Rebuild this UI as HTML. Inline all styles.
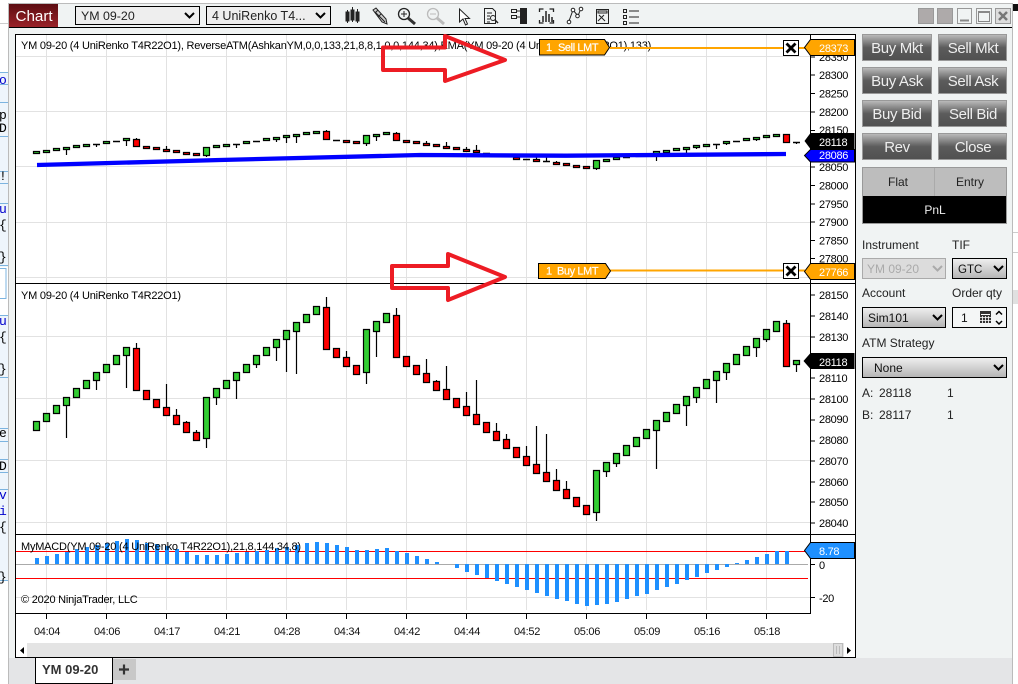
<!DOCTYPE html>
<html><head><meta charset="utf-8"><title>Chart</title>
<style>
html,body{margin:0;padding:0;background:#fff;width:1018px;height:684px;overflow:hidden}
svg{display:block;font-family:"Liberation Sans",Arial,sans-serif}
.ax text{font-size:11px;fill:#000;letter-spacing:-.3px}
.tm text{font-size:11px;fill:#111;text-anchor:middle;letter-spacing:-.3px}
.btn text{font-size:15px;fill:#eee;text-anchor:middle;letter-spacing:-.35px}
.lb text{font-size:12px;fill:#222}
.ti{font-size:11px;fill:#000;letter-spacing:-.215px}
.fl{font-size:11px;fill:#fff;letter-spacing:-.4px;stroke:#fff;stroke-width:.2px}
.pr{font-size:11px;fill:#fff;letter-spacing:-.3px}
</style></head><body>
<svg width="1018" height="684" viewBox="0 0 1018 684" xmlns="http://www.w3.org/2000/svg">
<defs>
<linearGradient id="bg" x1="0" y1="0" x2="0" y2="1"><stop offset="0" stop-color="#bdbdbd"/><stop offset=".5" stop-color="#5c5c5c"/><stop offset="1" stop-color="#505050"/></linearGradient>
<linearGradient id="sel" x1="0" y1="0" x2="0" y2="1"><stop offset="0" stop-color="#f0f0f0"/><stop offset="1" stop-color="#b4b4b4"/></linearGradient>
<linearGradient id="chart" x1="0" y1="0" x2="0" y2="1"><stop offset="0" stop-color="#5d0d12"/><stop offset="1" stop-color="#9a2228"/></linearGradient>
</defs>

<!-- background behind the window -->
<rect width="1018" height="684" fill="#fff"/>
<g font-family="'Liberation Mono',monospace" font-size="13">
<rect x="0" y="72" width="8" height="195" fill="#eef5fc"/>
<rect x="0" y="315" width="8" height="265" fill="#eef5fc"/>
<path d="M0 72.500H8M0 84.500H8M0 102.500H8M0 136.500H8M0 171.500H8M0 183.500H8M0 203.500H8M0 265.500H8M0 315.500H8M0 377.500H8M0 428.500H8M0 441.500H8M0 459.500H8M0 472.500H8M0 489.500H8M0 580.500H8" stroke="#7cb4e0" fill="none"/>
<rect x="-1" y="268.500" width="7" height="30" fill="#fff" stroke="#7cb4e0"/>
<text x="-1" y="84" fill="#00c">o:</text><text x="-1" y="119" fill="#000">p</text><text x="-1" y="132" fill="#000">D:</text>
<text x="-1" y="180" fill="#000">!!</text><text x="-1" y="213" fill="#00c">u:</text><text x="-1" y="229" fill="#000">{</text><text x="-1" y="261" fill="#000">}</text>
<text x="-1" y="325" fill="#00c">u:</text><text x="-1" y="341" fill="#000">{</text><text x="-1" y="373" fill="#000">}</text>
<text x="-1" y="437" fill="#000">e</text><text x="-1" y="470" fill="#000">D:</text><text x="-1" y="499" fill="#00c">v:</text><text x="-1" y="515" fill="#00c">i:</text><text x="-1" y="531" fill="#000">{</text><text x="-1" y="581" fill="#000">}</text>
</g>
<rect x="1012" y="4" width="6" height="7" fill="#111"/>
<rect x="1013" y="290" width="5" height="14" fill="#e0e0e0"/>
<path d="M0 23.500H8M1013 232.500H1018M1013 252.500H1018" stroke="#ccc"/>

<!-- window -->
<rect x="8.500" y="3.500" width="1004" height="690" fill="#f0f3f3" stroke="#bbb"/>
<rect x="9" y="658" width="1003" height="26" fill="#e4e5e7"/>
<path d="M9 27.500H1012" stroke="#000"/>

<!-- Chart tab -->
<rect x="9" y="4" width="49" height="23" fill="url(#chart)"/>
<text x="15.500" y="21" font-size="15.200" fill="#fff">Chart</text>

<!-- selects -->
<rect x="75.500" y="6.500" width="124" height="18" fill="#eee" stroke="#000"/>
<text x="81" y="20" font-size="12.400" fill="#222">YM 09-20</text>
<path d="M185 13l4.500 4.500 4.500-4.500" fill="none" stroke="#000" stroke-width="2"/>
<rect x="206.500" y="6.500" width="124" height="18" fill="#eee" stroke="#000"/>
<text x="212" y="20" font-size="12.500" fill="#222">4 UniRenko T4...</text>
<path d="M316 13l4.500 4.500 4.500-4.500" fill="none" stroke="#000" stroke-width="2"/>

<!-- toolbar icons -->
<g fill="none" stroke="#222">
<path d="M347.500 10V23M352.500 7V22M357.500 9V23" stroke-width="1"/>
<path d="M346 12h3v9h-3zM351 10h3v10h-3zM356 12h3v9h-3z" fill="#222"/>
<path d="M373 10l3-2 10 11 1 5-5-2z" fill="#ccc" stroke="#222"/><path d="M375 12l10 10M378 10l-3 3M381 14l-3 3" stroke-width="1"/>
<circle cx="404" cy="14" r="5.500" stroke-width="1.300"/><path d="M401 14h6M404 11v6"/><path d="M408 18l7 6" stroke="#333" stroke-width="3"/>
<g stroke="#bbb"><circle cx="433" cy="14" r="5.500" stroke-width="1.300"/><path d="M430 14h6"/><path d="M437 18l7 6" stroke-width="3"/></g>
<path d="M459.500 9v13l3.500-3 2.500 6 2-1-2.500-5.500h4.500z" fill="#fff" stroke-width="1"/>
<path d="M484.500 8.500h8l3 3v12h-11zM487 13h5M487 16h3M487 19h3M487 22h3"/><circle cx="493" cy="18" r="2.500"/><path d="M495 20l3 3" stroke-width="1.500"/>
<path d="M511.500 9.500h5v3h-5zM511.500 15.500h5v3h-5zM516 11h5M516 17h5"/><rect x="520" y="8" width="7" height="16" fill="#222" stroke="none"/>
<path d="M539.500 12V9h4M539.500 20v3h4M553.500 12V9h-4M553.500 20v3h-4" stroke-width="1.300"/><path d="M543 22v-6M546 22V11M549 22v-8M552 22v-5" stroke-width="1.500"/>
<path d="M569 21l4-11 5 6 3-8" stroke-width="1"/><circle cx="569" cy="22" r="1.800" fill="#fff"/><circle cx="573" cy="10" r="1.800" fill="#fff"/><circle cx="577.500" cy="16" r="1.800" fill="#fff"/><circle cx="581" cy="9" r="1.800" fill="#fff"/>
<path d="M596.500 9.500h12v14h-12zM598 11h9v2h-9zM599 15l6 6M604 15l-6 6" stroke-width="1"/>
<path d="M623.500 9.500h3v3h-3zM623.500 15.500h3v3h-3zM623.500 21.500h3v3h-3zM629 11h10M629 17h10M629 23h10" stroke-width="1"/>
</g>

<!-- window buttons -->
<rect x="918.500" y="8.500" width="15" height="15" fill="#aeaaaa" stroke="#999"/>
<rect x="937.500" y="8.500" width="15" height="15" fill="#aeaaaa" stroke="#999"/>
<rect x="957.500" y="8.500" width="14" height="15" fill="#f0f3f3" stroke="#999"/><path d="M960 20.500h9" stroke="#888" stroke-width="2"/>
<rect x="976.500" y="8.500" width="15" height="15" fill="#f0f3f3" stroke="#999"/><rect x="978.500" y="11.500" width="11" height="10" fill="none" stroke="#888"/><path d="M978 12h12" stroke="#888" stroke-width="2"/>
<rect x="995.500" y="8.500" width="15" height="15" fill="#ddd" stroke="#999"/><path d="M999 12l8 8M1007 12l-8 8" stroke="#777" stroke-width="2.500"/>

<!-- chart frame -->
<rect x="15.500" y="34.500" width="840" height="623" fill="#fff" stroke="#000"/>

<!-- grid -->
<path d="M46.500 35V283M106.500 35V283M166.500 35V283M226.500 35V283M286.500 35V283M346.500 35V283M406.500 35V283M466.500 35V283M526.500 35V283M586.500 35V283M646.500 35V283M706.500 35V283M766.500 35V283
M46.500 284V534M106.500 284V534M166.500 284V534M226.500 284V534M286.500 284V534M346.500 284V534M406.500 284V534M466.500 284V534M526.500 284V534M586.500 284V534M646.500 284V534M706.500 284V534M766.500 284V534
M46.500 535V610M106.500 535V610M166.500 535V610M226.500 535V610M286.500 535V610M346.500 535V610M406.500 535V610M466.500 535V610M526.500 535V610M586.500 535V610M646.500 535V610M706.500 535V610M766.500 535V610
M16 56.500H810M16 111.500H810M16 166.500H810M16 222.500H810M16 277.500H810M16 336.500H810M16 398.500H810M16 460.500H810M16 522.500H810M16 597.500H810" stroke="#e2e2e2" fill="none"/>

<!-- pane dividers -->
<path d="M16 283.500H855M16 534.500H855M16 613.500H811M810.500 35V613" stroke="#000" fill="none"/>
<path d="M46.500 614v5M106.500 614v5M166.500 614v5M226.500 614v5M286.500 614v5M346.500 614v5M406.500 614v5M466.500 614v5M526.500 614v5M586.500 614v5M646.500 614v5M706.500 614v5M766.500 614v5" stroke="#000"/>
<path d="M811 57h4M811 75h4M811 93.500h4M811 112h4M811 130.500h4M811 167h4M811 185.500h4M811 204h4M811 222h4M811 240.500h4M811 258.500h4M811 295h4M811 316h4M811 337h4M811 378h4M811 399h4M811 420h4M811 441h4M811 461h4M811 482h4M811 502h4M811 523h4M811 564.500h4M811 597.500h4" stroke="#000"/>

<!-- pane titles -->
<text class="ti" x="21" y="49">YM 09-20 (4 UniRenko T4R22O1), ReverseATM(AshkanYM,0,0,133,21,8,8,1,0,0,144,34),EMA(YM 09-20 (4 UniRenko T4R22O1),133)</text>
<text class="ti" x="21" y="299">YM 09-20 (4 UniRenko T4R22O1)</text>

<!-- top pane candles -->
<path d="M66.500 150V155M96.500 144V147M126.500 141V146M136.500 138V139M166.500 146V149M206.500 156V157M236.500 144V148M276.500 140V142M286.500 138V143M296.500 137V143M326.500 130V131M366.500 144V146M376.500 137V141M396.500 132V133M426.500 141V143M446.500 142V146M466.500 147V149M476.500 145V150M536.500 157V159M546.500 157V161M556.500 161V162M596.500 169V170M656.500 154V161M686.500 150V153M696.500 148V149M716.500 144V149M726.500 144V145M756.500 140V141M796.500 142V144" stroke="#000" stroke-width="1.200" fill="none"/>
<path d="M93 144.500h7M113 141.500h7M233 144.500h7M253 141.500h7M333 140.500h7M483 153.500h7M493 154.500h7M523 159.500h7M543 161.500h7M623 157.500h7M633 155.500h7M643 154.500h7M713 144.500h7M733 141.500h7M793 142.500h7" stroke="#000" stroke-width="1.500" fill="none"/>
<path d="M33.500 151.500h6v2h-6zM43.500 150.500h6v2h-6zM53.500 148.500h6v2h-6zM63.500 147.500h6v2h-6zM73.500 145.500h6v2h-6zM83.500 144.500h6v2h-6zM103.500 141.500h6v2h-6zM123.500 138.500h6v2h-6zM203.500 147.500h6v8h-6zM213.500 145.500h6v2h-6zM223.500 144.500h6v2h-6zM243.500 141.500h6v2h-6zM263.500 138.500h6v2h-6zM273.500 137.500h6v2h-6zM283.500 135.500h6v2h-6zM293.500 134.500h6v2h-6zM303.500 132.500h6v2h-6zM313.500 131.500h6v2h-6zM363.500 135.500h6v8h-6zM373.500 134.500h6v2h-6zM383.500 132.500h6v2h-6zM593.500 160.500h6v8h-6zM603.500 159.500h6v2h-6zM613.500 157.500h6v2h-6zM653.500 151.500h6v2h-6zM663.500 150.500h6v2h-6zM673.500 148.500h6v2h-6zM683.500 147.500h6v2h-6zM693.500 145.500h6v2h-6zM703.500 144.500h6v2h-6zM723.500 141.500h6v2h-6zM743.500 138.500h6v2h-6zM753.500 137.500h6v2h-6zM763.500 135.500h6v2h-6zM773.500 134.500h6v2h-6z" fill="#32cd32" stroke="#000" stroke-width="1.200"/>
<path d="M133.500 139.500h6v7h-6zM143.500 146.500h6v2h-6zM153.500 147.500h6v2h-6zM163.500 149.500h6v2h-6zM173.500 150.500h6v2h-6zM183.500 152.500h6v2h-6zM193.500 153.500h6v2h-6zM323.500 131.500h6v8h-6zM343.500 140.500h6v2h-6zM353.500 141.500h6v2h-6zM393.500 133.500h6v7h-6zM403.500 140.500h6v2h-6zM413.500 141.500h6v2h-6zM423.500 143.500h6v2h-6zM433.500 144.500h6v2h-6zM443.500 146.500h6v2h-6zM453.500 147.500h6v2h-6zM463.500 149.500h6v2h-6zM473.500 150.500h6v2h-6zM513.500 157.500h6v2h-6zM533.500 159.500h6v2h-6zM553.500 162.500h6v2h-6zM563.500 163.500h6v2h-6zM573.500 165.500h6v2h-6zM583.500 166.500h6v2h-6zM783.500 134.500h6v8h-6z" fill="#f00" stroke="#000" stroke-width="1.200"/>
<polyline points="37,165 220,160 420,155 566,155.700 786,154" fill="none" stroke="#0000ff" stroke-width="4.300"/>

<!-- main candles -->
<path d="M66.500 406V438M96.500 381V390M126.500 356V388M136.500 343V348M166.500 384V407M176.500 409V415M186.500 421V422M196.500 430V432M206.500 439V448M216.500 398V405M236.500 381V399M256.500 365V368M276.500 348V361M286.500 340V372M296.500 332V374M326.500 297V307M346.500 351V357M366.500 373V384M376.500 332V357M396.500 308V315M426.500 359V373M436.500 380V381M446.500 366V389M466.500 392V406M476.500 380V414M496.500 423V431M506.500 434V439M526.500 446V456M536.500 426V464M546.500 434V472M556.500 469V480M566.500 481V489M596.500 513V521M606.500 472V477M616.500 464V467M656.500 431V469M686.500 406V426M696.500 398V403M716.500 381V403M726.500 373V380M756.500 348V357M766.500 340V342M786.500 320V323M796.500 365V372" stroke="#000" stroke-width="1.200" fill="none"/>
<path d="M33.500 421.500h6v9h-6zM43.500 413.500h6v8h-6zM53.500 405.500h6v8h-6zM63.500 397.500h6v8h-6zM73.500 388.500h6v9h-6zM83.500 380.500h6v8h-6zM93.500 372.500h6v8h-6zM103.500 364.500h6v8h-6zM113.500 355.500h6v9h-6zM123.500 347.500h6v8h-6zM203.500 397.500h6v41h-6zM213.500 388.500h6v9h-6zM223.500 380.500h6v8h-6zM233.500 372.500h6v8h-6zM243.500 364.500h6v8h-6zM253.500 355.500h6v9h-6zM263.500 347.500h6v8h-6zM273.500 339.500h6v8h-6zM283.500 330.500h6v9h-6zM293.500 322.500h6v9h-6zM303.500 314.500h6v8h-6zM313.500 306.500h6v8h-6zM363.500 329.500h6v43h-6zM373.500 321.500h6v10h-6zM383.500 313.500h6v9h-6zM593.500 470.500h6v42h-6zM603.500 462.500h6v9h-6zM613.500 453.500h6v10h-6zM623.500 445.500h6v10h-6zM633.500 437.500h6v9h-6zM643.500 429.500h6v9h-6zM653.500 420.500h6v10h-6zM663.500 412.500h6v9h-6zM673.500 404.500h6v9h-6zM683.500 396.500h6v9h-6zM693.500 387.500h6v10h-6zM703.500 379.500h6v9h-6zM713.500 371.500h6v9h-6zM723.500 363.500h6v9h-6zM733.500 354.500h6v10h-6zM743.500 346.500h6v9h-6zM753.500 338.500h6v9h-6zM763.500 329.500h6v10h-6zM773.500 321.500h6v10h-6zM793.500 360.500h6v4h-6z" fill="#32cd32" stroke="#000" stroke-width="1.200"/>
<path d="M133.500 348.500h6v42h-6zM143.500 390.500h6v9h-6zM153.500 399.500h6v8h-6zM163.500 407.500h6v8h-6zM173.500 415.500h6v9h-6zM183.500 422.500h6v10h-6zM193.500 432.500h6v8h-6zM323.500 307.500h6v42h-6zM333.500 348.500h6v9h-6zM343.500 357.500h6v9h-6zM353.500 365.500h6v9h-6zM393.500 315.500h6v42h-6zM403.500 356.500h6v10h-6zM413.500 365.500h6v9h-6zM423.500 373.500h6v9h-6zM433.500 381.500h6v9h-6zM443.500 389.500h6v10h-6zM453.500 398.500h6v9h-6zM463.500 406.500h6v9h-6zM473.500 414.500h6v10h-6zM483.500 422.500h6v10h-6zM493.500 431.500h6v9h-6zM503.500 439.500h6v9h-6zM513.500 447.500h6v10h-6zM523.500 456.500h6v9h-6zM533.500 464.500h6v9h-6zM543.500 472.500h6v9h-6zM553.500 480.500h6v10h-6zM563.500 489.500h6v9h-6zM573.500 497.500h6v9h-6zM583.500 505.500h6v9h-6zM783.500 323.500h6v43h-6z" fill="#f00" stroke="#000" stroke-width="1.200"/>

<!-- MACD -->
<path d="M16 551.500H808M16 578.500H808" stroke="#f00" fill="none"/>
<path d="M16 564.500H808" stroke="#aaa" fill="none"/>
<path d="M37 558V564M47 556V564M57 554V564M67 552V564M77 549V564M87 547V564M97 545V564M107 543V564M117 541V564M127 539V564M137 540V564M147 543V564M157 544V564M167 546V564M177 549V564M187 552V564M197 555V564M207 555V564M217 555V564M227 554V564M237 553V564M247 552V564M257 551V564M267 550V564M277 548V564M287 547V564M297 545V564M307 543V564M317 542V564M327 543V564M337 545V564M347 547V564M357 550V564M367 550V564M377 549V564M387 548V564M397 551V564M407 553V564M417 556V564M427 559V564M437 562V564M457 564V568M467 564V572M477 564V575M487 564V578M497 564V581M507 564V584M517 564V587M527 564V590M537 564V593M547 564V596M557 564V599M567 564V601M577 564V604M587 564V606M597 564V605M607 564V604M617 564V602M627 564V599M637 564V596M647 564V594M657 564V590M667 564V587M677 564V584M687 564V580M697 564V577M707 564V573M717 564V570M727 564V567M737 563V564M747 560V564M757 557V564M767 554V564M777 551V564M787 551V564" stroke="#1e90ff" stroke-width="4" fill="none"/>
<text class="ti" x="21" y="550">MyMACD(YM 09-20 (4 UniRenko T4R22O1),21,8,144,34,8)</text>
<text class="ti" x="21" y="603">© 2020 NinjaTrader, LLC</text>

<!-- axes labels -->
<g class="ax">
<text x="819" y="61">28350</text><text x="819" y="79">28300</text><text x="819" y="97.500">28250</text><text x="819" y="116">28200</text><text x="819" y="134">28150</text><text x="819" y="171">28050</text><text x="819" y="189.500">28000</text><text x="819" y="208">27950</text><text x="819" y="226">27900</text><text x="819" y="244.500">27850</text><text x="819" y="262.500">27800</text>
<text x="819" y="299">28150</text><text x="819" y="320">28140</text><text x="819" y="341">28130</text><text x="819" y="382">28110</text><text x="819" y="403">28100</text><text x="819" y="423">28090</text><text x="819" y="444">28080</text><text x="819" y="465">28070</text><text x="819" y="486">28060</text><text x="819" y="506">28050</text><text x="819" y="527">28040</text>
<text x="819" y="569">0</text><text x="819" y="602">-20</text>
</g>
<g class="tm">
<text x="47" y="635">04:04</text><text x="107" y="635">04:06</text><text x="167" y="635">04:17</text><text x="227" y="635">04:21</text><text x="287" y="635">04:28</text><text x="347" y="635">04:34</text><text x="407" y="635">04:42</text><text x="467" y="635">04:44</text><text x="527" y="635">04:52</text><text x="587" y="635">05:06</text><text x="647" y="635">05:09</text><text x="707" y="635">05:16</text><text x="767" y="635">05:18</text>
</g>

<!-- red arrows -->
<polygon points="383,47.500 445,47.500 445,36 505,60 445,81 445,70 383,70" fill="none" stroke="#ed1c24" stroke-width="4" stroke-linejoin="round"/>
<polygon points="392,266 448,266 448,254 505,277 448,300 448,288 392,288" fill="none" stroke="#ed1c24" stroke-width="4" stroke-linejoin="round"/>

<!-- order lines -->
<path d="M610 48H783M799 48H805M610 270.500H783M799 270.500H805" stroke="#ffa500" stroke-width="2"/>
<path d="M539.500 39.500h65l5 8-5 7.500h-65z" fill="#ffa500" stroke="#000"/>
<text class="fl" x="546" y="51">1</text><text class="fl" x="558" y="51">Sell LMT</text>
<path d="M538.500 263.500h67l5 7.500-5 7.500h-67z" fill="#ffa500" stroke="#000"/>
<text class="fl" x="546" y="274.500">1</text><text class="fl" x="557" y="274.500">Buy LMT</text>
<rect x="783.500" y="40.500" width="15" height="15" fill="#fff" stroke="#000"/><path d="M786.500 43.500l9 9M795.500 43.500l-9 9" stroke="#000" stroke-width="2.800"/>
<rect x="783.500" y="263.500" width="15" height="15" fill="#fff" stroke="#000"/><path d="M786.500 266.500l9 9M795.500 266.500l-9 9" stroke="#000" stroke-width="2.800"/>
<path d="M854.500 39.500h-44l-6 8 6 8h44z" fill="#ffa500" stroke="#000"/>
<text class="pr" x="819" y="52">28373</text>
<path d="M854.500 263.500h-44l-6 8 6 8h44z" fill="#ffa500" stroke="#000"/>
<text class="pr" x="819" y="276">27766</text>
<path d="M854.500 133h-44l-6 8 6 8h44z" fill="#000"/>
<text class="pr" x="819" y="146">28118</text>
<path d="M854.500 149.500h-44l-6 6 6 6.500h44z" fill="#0000ff" stroke="#000"/>
<text class="pr" x="819" y="159">28086</text>
<path d="M854.500 353h-44l-7 8 7 8h44z" fill="#000"/>
<text class="pr" x="819" y="366">28118</text>
<path d="M854.500 542.500h-44l-6 8 6 8h44z" fill="#1e90ff" stroke="#000"/>
<text class="pr" x="819" y="555">8.78</text>

<!-- scrollbar -->
<rect x="16" y="643" width="839" height="14" fill="#e4e4e4"/>
<rect x="16" y="643" width="11" height="14" fill="#fff"/>
<path d="M24 647v7l-4-3.500z" fill="#000"/>
<rect x="833.500" y="643.500" width="9" height="13" fill="#ddd" stroke="#bbb"/><path d="M836.500 646v8M839.500 646v8" stroke="#bbb"/>
<rect x="844" y="643" width="11" height="14" fill="#fff"/>
<path d="M847 647v7l4-3.500z" fill="#000"/>

<!-- bottom tab -->
<path d="M35.500 658V683.500H112.500V658" fill="#fff" stroke="#000"/>
<text x="42" y="674" font-size="13" font-weight="bold" fill="#333">YM 09-20</text>
<rect x="113" y="659" width="23" height="21" fill="#c8c8c8"/>
<path d="M119 669.500h10M124 664.500v10" stroke="#333" stroke-width="2.200"/>

<!-- order buttons -->
<g fill="url(#bg)" stroke="#999">
<rect x="862.500" y="34.500" width="69" height="26"/><rect x="938.500" y="34.500" width="68" height="26"/>
<rect x="862.500" y="67.500" width="69" height="26"/><rect x="938.500" y="67.500" width="68" height="26"/>
<rect x="862.500" y="100.500" width="69" height="26"/><rect x="938.500" y="100.500" width="68" height="26"/>
<rect x="862.500" y="133.500" width="69" height="26"/><rect x="938.500" y="133.500" width="68" height="26"/>
</g>
<g class="btn">
<text x="897" y="53">Buy Mkt</text><text x="973" y="53">Sell Mkt</text>
<text x="897" y="86">Buy Ask</text><text x="973" y="86">Sell Ask</text>
<text x="897" y="119">Buy Bid</text><text x="973" y="119">Sell Bid</text>
<text x="897" y="152">Rev</text><text x="973" y="152">Close</text>
</g>

<!-- position box -->
<rect x="862.500" y="167.500" width="144" height="56" fill="#bdbdbd" stroke="#999"/>
<rect x="863" y="196" width="143" height="27" fill="#000"/>
<path d="M934.500 168V196" stroke="#aaa"/>
<text x="898" y="186" font-size="12" fill="#222" text-anchor="middle">Flat</text>
<text x="970" y="186" font-size="12" fill="#222" text-anchor="middle">Entry</text>
<text x="935" y="214" font-size="12" fill="#eee" text-anchor="middle">PnL</text>

<!-- form -->
<g class="lb">
<text x="862" y="249">Instrument</text><text x="952" y="249">TIF</text>
<text x="862" y="297">Account</text><text x="952" y="297">Order qty</text>
<text x="862" y="347">ATM Strategy</text>
<text x="862" y="397">A:</text><text x="879" y="397">28118</text><text x="947" y="397" fill="#113">1</text>
<text x="862" y="419">B:</text><text x="879" y="419">28117</text><text x="947" y="419" fill="#113">1</text>
</g>
<rect x="862.500" y="258.500" width="83" height="20" fill="#dcdcdc" stroke="#aaa"/>
<text x="867" y="273" font-size="12" fill="#aaa">YM 09-20</text>
<path d="M933 266l4.500 4.500 4.500-4.500" fill="none" stroke="#aaa" stroke-width="2"/>
<rect x="952.500" y="258.500" width="54" height="20" fill="url(#sel)" stroke="#000"/>
<text x="958" y="273" font-size="11.500" fill="#111">GTC</text>
<path d="M994 266l4.500 4.500 4.500-4.500" fill="none" stroke="#000" stroke-width="2"/>
<rect x="862.500" y="307.500" width="83" height="20" fill="url(#sel)" stroke="#000"/>
<text x="868" y="322" font-size="12" fill="#111">Sim101</text>
<path d="M933 315l4.500 4.500 4.500-4.500" fill="none" stroke="#000" stroke-width="2"/>
<rect x="952.500" y="307.500" width="54" height="20" fill="#f4f6f6" stroke="#000"/>
<text x="961" y="322" font-size="12" fill="#111">1</text>
<rect x="980" y="311" width="11" height="12" fill="#333"/>
<path d="M981 314.500h9" stroke="#fff"/><path d="M982.500 316v7M985.500 316v7M988.500 316v7M980 317.500h11M980 320.500h11" stroke="#fff" stroke-width=".8"/>
<path d="M996 314.500l3-3 3 3M996 321l3 3 3-3" fill="none" stroke="#000" stroke-width="1.500"/>
<rect x="862.500" y="357.500" width="144" height="20" fill="url(#sel)" stroke="#000"/>
<text x="874" y="372" font-size="12" fill="#111">None</text>
<path d="M994 365l4.500 4.500 4.500-4.500" fill="none" stroke="#000" stroke-width="2"/>
</svg>
</body></html>
